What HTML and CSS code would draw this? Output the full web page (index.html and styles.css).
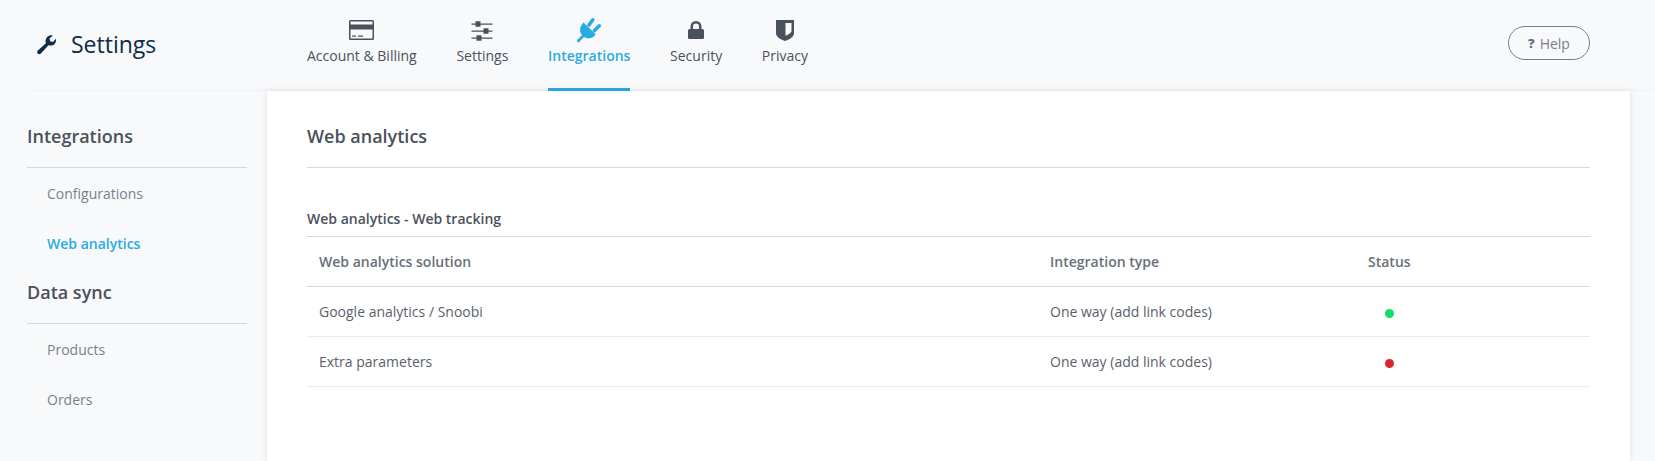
FILE: index.html
```html
<!DOCTYPE html>
<html lang="en">
<head>
<meta charset="utf-8">
<title>Settings</title>
<link rel="stylesheet" href="styles.css">
</head>
<body>
<header class="topbar">
  <div class="brand">
    <svg class="brand-icon" viewBox="0 0 20 20"><path fill="#0f2b46" d="M1.200 16.400 9 9.400C8.200 6.600 9 4.400 11 3c1.400-.9 3-1.100 4.300-.7l-3 2.600.5 2.600 2.600.7 2.700-2.900c.4 1.700 0 3.400-1.200 4.600-1.500 1.500-3.500 1.900-5.500 1.200l-7 7.500c-.9.900-2 .9-2.800.1-.8-.8-.8-1.600 0-2.300z"/></svg>
    <span class="brand-title">Settings</span>
  </div>
  <nav class="tabs">
    <a class="tab">
      <svg class="tab-icon" viewBox="0 0 30 27"><path fill="#4a515b" fill-rule="evenodd" d="M3.500 3h22a1.500 1.500 0 0 1 1.500 1.500v17a1.500 1.500 0 0 1-1.500 1.500h-22a1.500 1.500 0 0 1-1.500-1.500v-17a1.500 1.500 0 0 1 1.500-1.500zM3.500 4.500v3h22v-3zM3.500 12.500v9h22v-9zM5 18.500h4v1.200h-4zM11 18.500h5v1.200h-5z"/></svg>
      <span>Account &amp; Billing</span>
    </a>
    <a class="tab">
      <svg class="tab-icon" viewBox="0 0 30 27"><path fill="#4a515b" d="M4.500 6.400h21v1.300h-21zM4.500 13.400h21v1.300h-21zM4.500 20.400h21v1.300h-21zM8.500 4.300h5v5.500h-5zM16.500 11.300h5v5.500h-5zM9.500 18.300h5v5.500h-5z"/></svg>
      <span>Settings</span>
    </a>
    <a class="tab is-active">
      <svg class="tab-icon" viewBox="0 0 30 27"><path fill="#29abe2" d="M9.500 5.500 21.500 17c-1 3.300-4.800 4.800-8 4.300-1.400-.2-2.600-.8-3.600-1.500C7.500 18 6 15.800 6 13.300 6 10.300 7.500 7.500 9.500 5.500z"/><path fill="none" stroke="#29abe2" stroke-linecap="round" stroke-width="3.600" d="M15 8 18.800 2.800M20.500 13.500 25.300 8.800"/><path fill="none" stroke="#29abe2" stroke-linecap="round" stroke-width="2.600" d="M9 19 4.200 24"/></svg>
      <span>Integrations</span>
    </a>
    <a class="tab">
      <svg class="tab-icon" viewBox="0 0 30 27"><path fill="#4a515b" fill-rule="evenodd" d="M9.500 12V9.500a5.500 5.500 0 0 1 11 0V12h1a1.500 1.500 0 0 1 1.500 1.500v7a1.500 1.500 0 0 1-1.500 1.500h-13a1.500 1.500 0 0 1-1.500-1.500v-7a1.500 1.500 0 0 1 1.500-1.500zM12 12h6V9.500a3 3 0 0 0-6 0z"/></svg>
      <span>Security</span>
    </a>
    <a class="tab">
      <svg class="tab-icon" viewBox="0 0 30 27"><path fill="#4a515b" fill-rule="evenodd" d="M6 3h18v13.500c0 3-4 5.700-9 7.500-5-1.800-9-4.500-9-7.500zM15.500 6v12.700c3-1.300 5.500-2.700 6-4.500v-8.200z"/></svg>
      <span>Privacy</span>
    </a>
  </nav>
  <a class="help"><b class="help-mark">?</b> Help</a>
</header>
<div class="layout">
  <aside class="sidebar">
    <section class="side-group">
      <h2 class="side-title">Integrations</h2>
      <a class="side-link">Configurations</a>
      <a class="side-link is-active">Web analytics</a>
    </section>
    <section class="side-group">
      <h2 class="side-title">Data sync</h2>
      <a class="side-link">Products</a>
      <a class="side-link">Orders</a>
    </section>
  </aside>
  <main class="panel">
    <h1 class="panel-title">Web analytics</h1>
    <h3 class="table-caption">Web analytics - Web tracking</h3>
    <table class="data">
      <thead>
        <tr><th class="col-a">Web analytics solution</th><th class="col-b">Integration type</th><th>Status</th></tr>
      </thead>
      <tbody>
        <tr><td>Google analytics / Snoobi</td><td>One way (add link codes)</td><td><span class="dot dot-on"></span></td></tr>
        <tr><td>Extra parameters</td><td>One way (add link codes)</td><td><span class="dot dot-off"></span></td></tr>
      </tbody>
    </table>
  </main>
</div>
</body>
</html>
```
FILE: styles.css
```css
* { box-sizing: border-box; }
html, body { margin: 0; height: 100%; overflow: hidden; }
body {
  background: #f8f9fb;
  font-family: "Open Sans", "Noto Sans", sans-serif;
  font-size: 14px;
  color: #4a515b;
}
.topbar {
  height: 91px;
  display: flex;
  align-items: flex-start;
  padding-left: 36px;
  padding-right: 65px;
}
.brand {
  width: 271px;
  display: flex;
  align-items: center;
  gap: 13px;
  height: 88px;
}
.brand-icon { width: 22px; height: 22px; flex: none; }
.brand-title { font-size: 23px; color: #0f2b46; line-height: 28px; }
.tabs { display: flex; gap: 39.700px; flex: 1; height: 91px; }
.tab {
  display: flex;
  flex-direction: column;
  align-items: center;
  height: 91px;
  padding-top: 17px;
  border-bottom: 3px solid transparent;
  color: #4a515b;
  font-size: 14px;
  line-height: 19px;
}
.tab-icon { height: 27px; width: 30px; margin-bottom: 2px; display: block; flex: none; }
.tab.is-active { color: #29abe2; border-bottom-color: #29abe2; font-weight: 600; }
.help {
  margin-top: 26px;
  width: 82px;
  height: 34px;
  border: 1px solid #78808a;
  border-radius: 17px;
  display: flex;
  align-items: center;
  justify-content: center;
  gap: 5px;
  font-size: 14px;
  color: #78808a;
}
.help-mark { font-weight: 800; font-size: 13px; color: #66707a; }
.layout {
  display: flex;
  height: 370px;
  margin-left: 27px;
  box-shadow: 0 -3px 3px -2px rgba(40, 50, 60, .04);
}
.sidebar { width: 240px; padding: 27px 20px 0 0; flex: none; }
.side-title {
  margin: 0;
  height: 50px;
  font-size: 18px;
  font-weight: 600;
  line-height: 36px;
  color: #4a515b;
  border-bottom: 1px solid #d5d8dc;
}
.side-group + .side-group { margin-top: 6px; }
.side-link {
  display: block;
  height: 50px;
  line-height: 52px;
  padding-left: 20px;
  font-size: 14px;
  color: #78808a;
}
.side-link.is-active { color: #29abe2; font-weight: 600; }
.panel {
  width: 1363px;
  flex: none;
  background: #fff;
  padding: 27px 40px 0;
  box-shadow: 0 0 6px rgba(40, 50, 60, .12);
}
.panel-title {
  margin: 0;
  height: 50px;
  font-size: 18px;
  font-weight: 600;
  line-height: 36px;
  color: #4a515b;
  border-bottom: 1px solid #d5d8dc;
}
.table-caption {
  margin: 40px 0 0;
  font-size: 14px;
  font-weight: 600;
  line-height: 21px;
  height: 28px;
  color: #4a515b;
}
.data { width: 100%; border-collapse: collapse; table-layout: fixed; }
.data th, .data td {
  height: 50px;
  padding: 0 12px;
  text-align: left;
  font-size: 14px;
}
.data th { font-weight: 600; color: #68707a; border-top: 1px solid #d5d8dc; border-bottom: 1px solid #d5d8dc; }
.data td { color: #5a616b; border-bottom: 1px solid #e8eaec; }
.col-a { width: 731px; }
.col-b { width: 318px; }
.dot { display: block; width: 9px; height: 9px; border-radius: 50%; margin: 3px 0 0 17px; }
.dot-on { background: #10e06a; }
.dot-off { background: #d9262e; }
```
